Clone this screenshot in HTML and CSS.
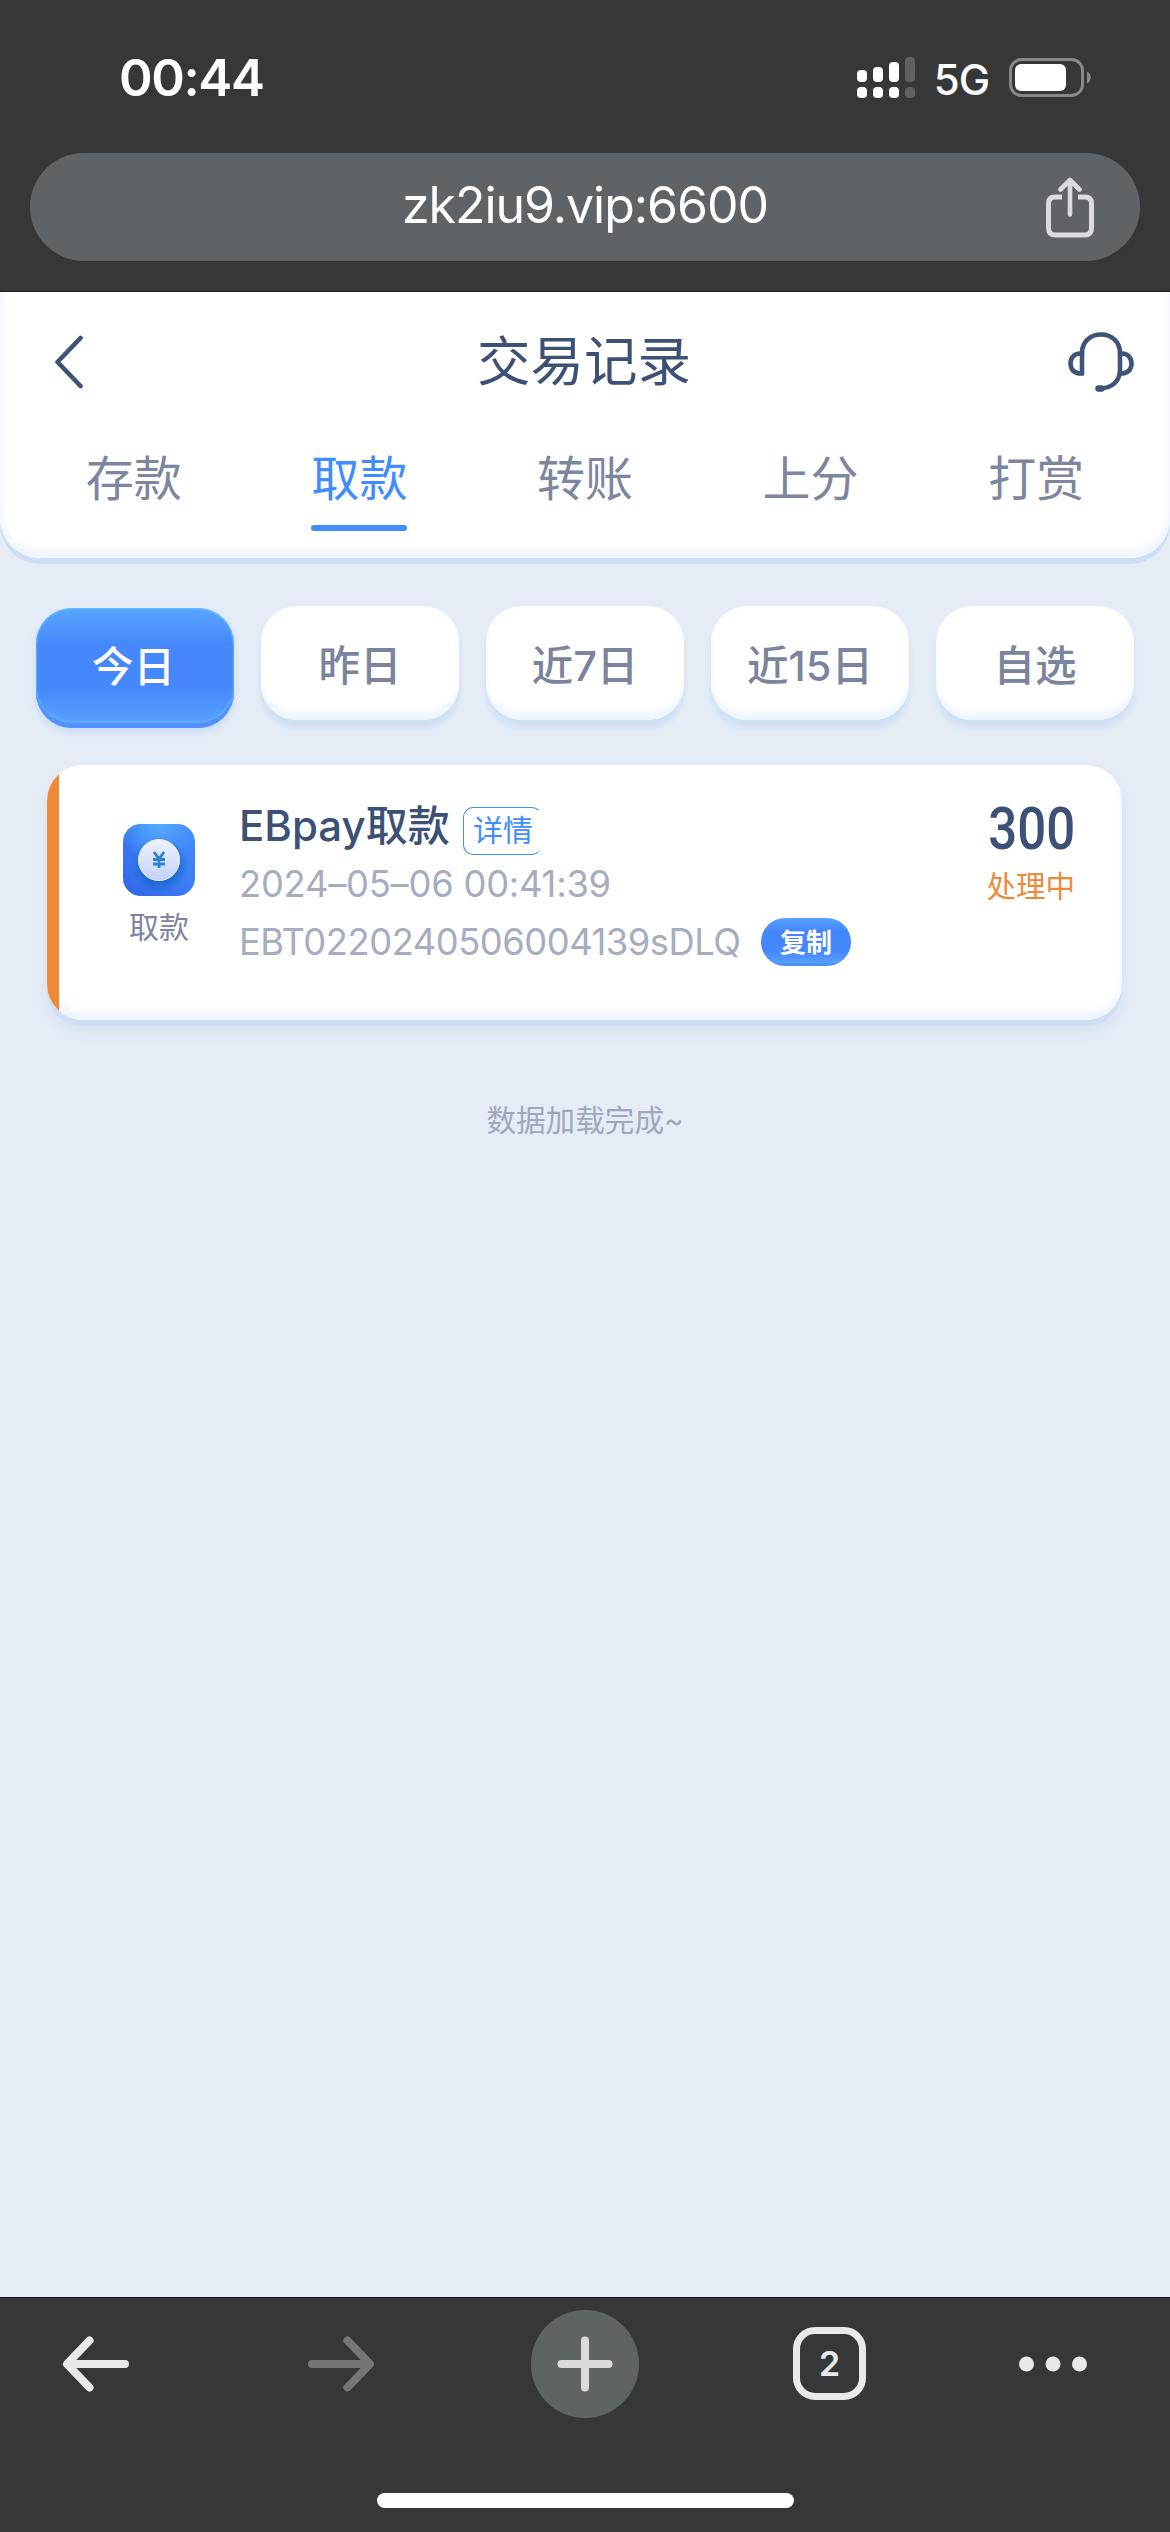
FILE: index.html
```html
<!DOCTYPE html>
<html lang="zh-CN">
<head>
<meta charset="utf-8">
<title>交易记录</title>
<link rel="stylesheet" href="styles.css">
</head>
<body>
<div class="screen">
  <div class="browser-top">
    <div class="status">
      <span class="clock">00:44</span>
      <div class="status-right">
        <svg class="signal" width="59" height="42" viewBox="0 0 59 42" fill="#fff">
          <rect x="0" y="13" width="10" height="12" rx="4"/><rect x="0" y="30" width="10" height="11" rx="4"/>
          <rect x="16" y="10" width="10" height="15" rx="4"/><rect x="16" y="30" width="10" height="11" rx="4"/>
          <rect x="32" y="5" width="10" height="20" rx="4"/><rect x="32" y="30" width="10" height="11" rx="4"/>
          <g fill="#5f6061"><rect x="48" y="0" width="10" height="25" rx="4"/><rect x="48" y="30" width="10" height="11" rx="4"/></g>
        </svg>
        <span class="network">5G</span>
        <svg class="battery" width="84" height="40" viewBox="0 0 84 40">
          <rect x="1.5" y="1.5" width="72" height="36" rx="11" fill="none" stroke="#87888a" stroke-width="3"/>
          <rect x="6" y="6" width="51" height="27" rx="6" fill="#fff"/>
          <path d="M78 13.5c5 2 5 10 0 12z" fill="#87888a"/>
        </svg>
      </div>
    </div>
    <div class="address">
      <span></span>
      <span class="url">zk2iu9.vip:6600</span>
      <svg class="share" width="48" height="62" viewBox="0 0 48 62" fill="none" stroke="#dadbe0" stroke-width="5" stroke-linecap="round" stroke-linejoin="round">
        <path d="M16 20H9q-6.500 0-6.500 6.500V51q0 7 7 7h29q7 0 7-7V26.500q0-6.500-6.500-6.500H32" stroke-linecap="butt"/>
        <path d="M24 37.500V3.500M14.500 12.500 24 3l9.500 9.500" stroke-width="4.600"/>
      </svg>
    </div>
  </div>

  <main class="page">
    <header class="header">
      <div class="title-row">
        <svg class="back" width="30" height="54" viewBox="0 0 30 54" fill="none" stroke="#3f5277" stroke-width="4.600" stroke-linecap="round" stroke-linejoin="round"><path d="M26.500 3 3.500 27l23 24"/></svg>
        <h1>交易记录</h1>
        <svg class="service" width="66" height="62" viewBox="0 0 66 62" fill="none" stroke="#3f5277" stroke-width="4.600" stroke-linecap="round" stroke-linejoin="round">
          <path d="M14 42.500V22C14 11 22 3.500 33 3.500S52 11 52 22v17c0 11-8 18.500-21 18.500"/>
          <path d="M14 22.500h-2C6 22.500 2.500 27 2.500 32.500S6 43 14 42.500M52 22.500h2c6 0 9.500 4.500 9.500 10S60 43 52 42.500"/>
          <path d="M30.500 57.500h3" stroke-width="6.500"/>
        </svg>
      </div>
      <nav class="tabs">
        <a>存款</a><a class="active">取款</a><a>转账</a><a>上分</a><a>打赏</a>
      </nav>
    </header>

    <div class="filters">
      <button class="active">今日</button><button>昨日</button><button>近7日</button><button>近15日</button><button>自选</button>
    </div>

    <article class="record">
      <div class="kind">
        <svg width="72" height="72" viewBox="0 0 72 72">
          <defs>
            <linearGradient id="tile" x1="0" y1="1" x2="1" y2="0"><stop offset="0" stop-color="#2f65e6"/><stop offset=".5" stop-color="#3a7cf4"/><stop offset="1" stop-color="#438cfa"/></linearGradient>
            <radialGradient id="glow" cx=".5" cy="0" r=".55"><stop offset="0" stop-color="#56abff"/><stop offset="1" stop-color="#56abff" stop-opacity="0"/></radialGradient>
            <radialGradient id="shade" cx=".5" cy=".5" r=".5"><stop offset=".6" stop-color="#1565c8" stop-opacity=".75"/><stop offset="1" stop-color="#1565c8" stop-opacity="0"/></radialGradient>
            <linearGradient id="coin" x1=".5" y1="0" x2=".5" y2="1"><stop offset="0" stop-color="#eef2fe"/><stop offset=".6" stop-color="#d5defd"/><stop offset="1" stop-color="#c3d0f8"/></linearGradient>
          </defs>
          <rect width="72" height="72" rx="18" fill="url(#tile)"/>
          <rect width="72" height="72" rx="18" fill="url(#glow)"/>
          <circle cx="37" cy="41" r="28" fill="url(#shade)"/>
          <circle cx="36" cy="36" r="20.500" fill="url(#coin)" stroke="#edf2ff"/>
          <path d="M31 28l5 7 5-7M36 35v9M30 35.500h12M30 40h12" fill="none" stroke="#2c82d6" stroke-width="2.800"/>
        </svg>
        <span>取款</span>
      </div>
      <div class="detail">
        <div class="name"><span class="name-text">EBpay取款</span><a class="tag">详情</a></div>
        <div class="date">2024–05–06 00:41:39</div>
        <div class="order"><span class="order-id">EBT0220240506004139sDLQ</span><button class="copy">复制</button></div>
      </div>
      <div class="result"><span class="amount">300</span><span class="state">处理中</span></div>
    </article>
    <p class="end">数据加载完成~</p>
  </main>

  <div class="browser-bottom">
    <div class="toolbar">
      <svg width="68" height="56" viewBox="0 0 68 56" fill="none" stroke="#e8e8ed" stroke-width="8" stroke-linecap="round" stroke-linejoin="round"><path d="M63 28H6M27.500 4.500 5 28l22.500 23.500"/></svg>
      <svg width="68" height="56" viewBox="0 0 68 56" fill="none" stroke="#747578" stroke-width="8" stroke-linecap="round" stroke-linejoin="round"><path d="M5 28h57M40.500 4.500 63 28 40.500 51.500"/></svg>
      <span class="new-tab"><svg width="56" height="56" viewBox="0 0 56 56" stroke="#dadbe0" stroke-width="8" stroke-linecap="round"><path d="M4.500 28h47M28 4.500v47"/></svg></span>
      <span class="tab-count">2</span>
      <svg width="68" height="16" viewBox="0 0 68 16" fill="#e8e8ed"><circle cx="7.500" cy="8" r="7.500"/><circle cx="34" cy="8" r="7.500"/><circle cx="60.500" cy="8" r="7.500"/></svg>
    </div>
    <div class="home-indicator"></div>
  </div>
</div>
</body>
</html>
```

FILE: styles.css
```css
* { box-sizing: border-box; margin: 0; padding: 0; }
body { font-family: Inter, "Noto Sans CJK SC", sans-serif; background: #363739; }
svg { display: block; flex: none; }
button { border: 0; font-family: inherit; white-space: nowrap; }

.screen { width: 1170px; height: 2532px; display: flex; flex-direction: column; background: #e5ecf6; }

.browser-top { height: 292px; background: #363739; border-bottom: 1px solid #1c1c1d; flex: none; }
.status { height: 153px; padding: 0 77px 0 119px; display: flex; justify-content: space-between; }
.clock { margin-top: 48px; font-size: 51px; line-height: 60px; font-weight: 600; color: #fff; letter-spacing: -1.4px; }
.status-right { display: flex; align-items: flex-start; }
.signal { margin-top: 57px; }
.network { width: 93px; margin-top: 55px; padding-right: 2px; text-align: center; font-size: 42px; line-height: 50px; font-weight: 500; color: #fff; letter-spacing: -1px; }
.battery { margin-top: 58px; }
.address { margin: 0 30px; padding: 0 46px; height: 108px; border-radius: 54px; background: #5e6367; display: grid; grid-template-columns: 48px 1fr 48px; }
.url { text-align: center; color: #fff; font-size: 50px; line-height: 104px; letter-spacing: -1.05px; }
.share { margin-top: 24px; }

.page { flex: 1; }
.header { height: 266px; background: #fff; border-radius: 0 0 40px 40px; box-shadow: 0 6px 0 #cfdff3, inset 0 -2px 0 #f3f7ff, inset 0 -10px 12px -4px #eaf0fd, inset 8px 0 6px -4px #f8faff, inset -8px 0 6px -4px #f8faff; }
.title-row { height: 139px; padding: 0 36px; display: grid; grid-template-columns: 66px 1fr 66px; align-items: center; }
.back { margin-left: 18px; }
.title-row h1 { text-align: center; font-size: 53.5px; line-height: 60px; font-weight: 400; color: #3d5075; padding-right: 2px; }
.tabs { display: grid; grid-template-columns: repeat(5, 1fr); padding: 0 21px; justify-items: center; }
.tabs a { height: 100px; padding-top: 18px; font-size: 48px; line-height: 60px; color: #7c869f; position: relative; }
.tabs .active { color: #3f8dff; }
.tabs .active::after { content: ""; position: absolute; left: 0; right: 0; bottom: 0; height: 6px; border-radius: 3px; background: #3f8dff; }

.filters { display: grid; grid-template-columns: repeat(5, 198px); column-gap: 27px; padding: 48px 36px 0; height: 207px; align-items: start; }
.filters button { height: 114px; border-radius: 36px; background: #fff; color: #7b849f; font-size: 41.5px; line-height: 60px; font-weight: 500; padding-top: 5px; box-shadow: 0 8px 6px #cfdff3, inset 0 -12px 10px -5px #edf4ff, inset 0 0 4px #f2f6fd; }
.filters .active { margin-top: 2px; height: 120px; padding: 0 3px 3px 0; color: #fff; background: linear-gradient(#5aa5ff, #4688fb 30%, #4688fb 66%, #589fff 94%); box-shadow: 0 4px 8px #c6dbf4, inset 0 1px 2px #65c0ff, inset 0 -5px 1px #5390ff, inset 0 -7px 2px #63aeff, inset 0 0 3px #63b8ff; }

.record { margin: 0 48px 0 47px; height: 255px; border-radius: 36px; overflow: hidden; display: flex; background: #fff; box-shadow: 0 6px 0 #cfdff3, 0 10px 16px #d5dfef, inset 0 -14px 12px -6px #edf4ff, inset -4px 0 5px -2px #f3f7fd; }
.record::before { content: ""; width: 12px; background: #ee8a37; flex: none; }
.kind { width: 200px; margin-top: 59px; display: flex; flex-direction: column; align-items: center; font-size: 30px; line-height: 36px; color: #7c869f; flex: none; }
.kind span { margin-top: 13px; }
.detail { width: 620px; margin-left: -20px; padding-top: 32px; flex: none; }
.name { height: 76px; display: flex; align-items: flex-start; }
.name-text { width: 224px; white-space: nowrap; font-size: 42px; line-height: 57px; font-weight: 500; color: #3d5075; }
.tag { width: 79px; height: 48px; margin-top: 10px; padding-left: 9px; border: 1.500px solid #3f8dff; border-right-color: transparent; border-radius: 10px; color: #3f8dff; font-size: 30px; line-height: 45px; white-space: nowrap; }
.date, .order-id { color: #a5adc1; font-size: 36.3px; font-weight: 400; line-height: 44px; white-space: nowrap; }
.date { height: 45px; margin-top: -11px; letter-spacing: -.22px; }
.order { display: flex; align-items: center; height: 48px; margin-top: 11px; }
.order-id { width: 522px; margin-top: -1px; letter-spacing: -.45px; }
.copy { width: 90px; height: 48px; padding-bottom: 3px; border-radius: 24px; color: #fff; font-size: 26px; font-weight: 700; background: linear-gradient(#58a2ff, #4486fb 28%, #4486fb 68%, #589fff 94%, #4c8dff 95%); }
.result { margin: 33px 47px 0 auto; display: flex; flex-direction: column; align-items: flex-end; }
.amount { font-family: Roboto, sans-serif; font-size: 60px; line-height: 62px; font-weight: 500; color: #3d5075; transform: scaleX(.85); transform-origin: right; }
.state { margin-top: 8px; font-size: 29.5px; line-height: 36px; color: #ee8a37; }
.end { margin-top: 80px; text-align: center; font-size: 29.6px; line-height: 40px; color: #a0a6bc; }

.browser-bottom { height: 235px; background: #363739; border-top: 1px solid #15161a; flex: none; }
.toolbar { height: 131px; padding-left: 62px; display: grid; grid-template-columns: 245px 224px 262px 226px 68px; align-items: center; }
.new-tab { width: 108px; height: 108px; border-radius: 50%; background: #5e6366; display: grid; place-items: center; }
.tab-count { width: 73px; height: 73px; border: 7px solid #e8e8ed; border-radius: 22px; color: #e8e8ed; text-align: center; font-size: 34px; line-height: 59px; font-weight: 600; }
.home-indicator { width: 417px; height: 15px; margin: 64px auto 0; border-radius: 8px; background: #fdfdfd; }
```
